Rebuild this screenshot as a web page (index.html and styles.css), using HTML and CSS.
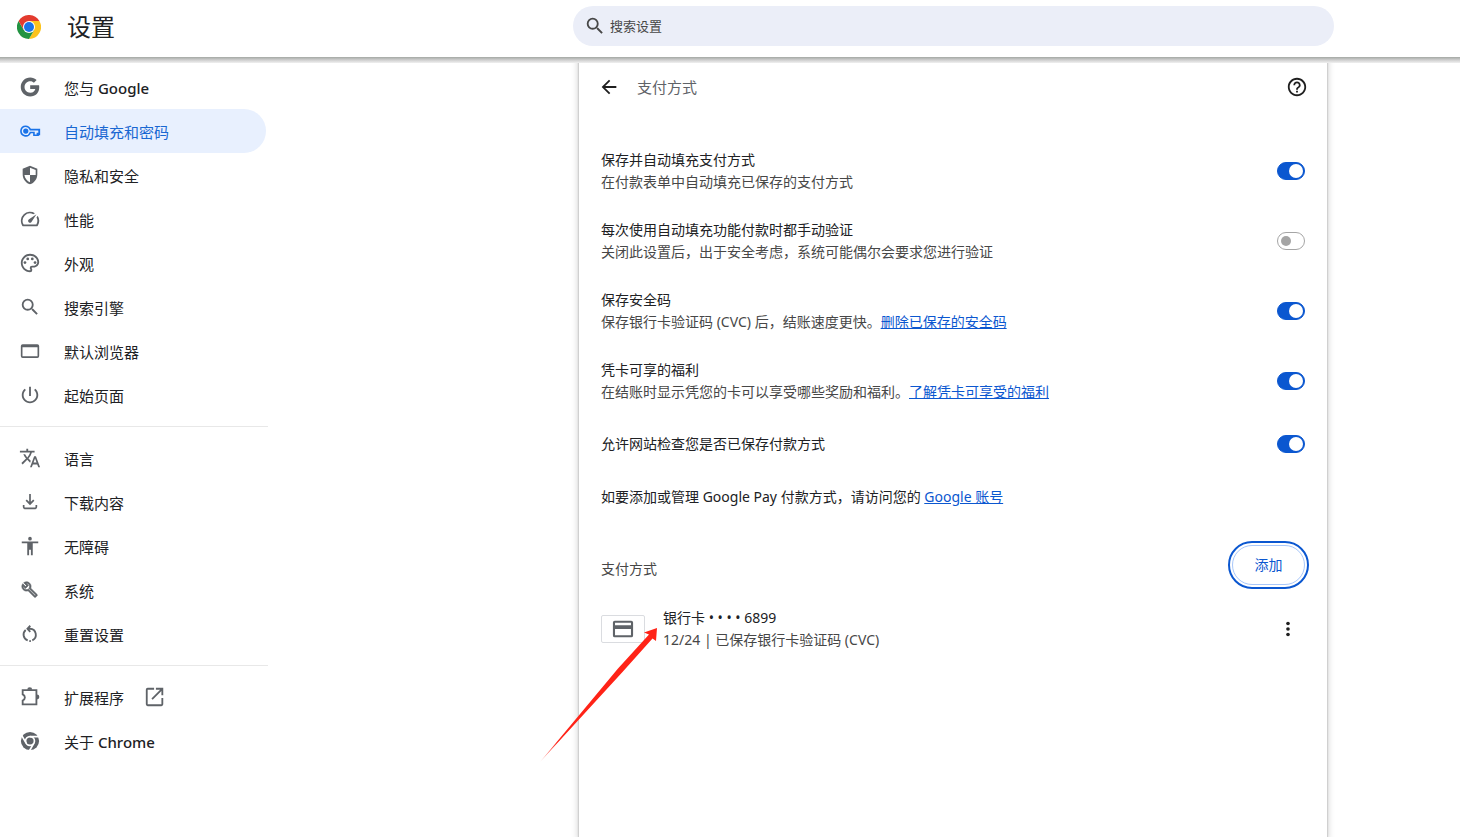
FILE: index.html
```html
<!DOCTYPE html>
<html lang="zh-CN">
<head>
<meta charset="utf-8">
<meta name="viewport" content="width=device-width, initial-scale=1">
<title>设置 - 支付方式</title>
<link rel="stylesheet" href="styles.css">
</head>
<body>
<header class="toolbar">
  <div class="brand">
    <svg class="brand-logo" viewBox="0 0 48 48" aria-hidden="true">
      <path fill="#e33b2e" d="M24 24 3.2 12A24 24 0 0 1 44.8 12Z"/>
      <path fill="#fcc31e" d="M24 12H44.8A24 24 0 0 1 24 48L34.4 30Z"/>
      <path fill="#229342" d="M13.6 30 3.2 12A24 24 0 0 0 24 48L34.4 30Z"/>
      <path fill="#e33b2e" d="M3.2 12 13.6 30 24 12Z"/>
      <circle cx="24" cy="24" r="12" fill="#fff"/>
      <circle cx="24" cy="24" r="10" fill="#1a73e8"/>
    </svg>
    <h1 class="brand-title">设置</h1>
  </div>
  <label class="search">
    <svg class="icon" viewBox="0 0 24 24" aria-hidden="true"><path d="M15.5 14h-.79l-.28-.27A6.47 6.47 0 0 0 16 9.5 6.5 6.5 0 1 0 9.5 16c1.61 0 3.09-.59 4.23-1.57l.27.28v.79l5 4.99L20.49 19l-4.99-5zm-6 0a4.5 4.5 0 1 1 0-9 4.5 4.5 0 0 1 0 9z"/></svg>
    <input class="search-input" type="search" placeholder="搜索设置" aria-label="搜索设置">
  </label>
</header>

<div class="page">
  <nav class="menu" aria-label="设置">
    <a class="menu-item" href="#people">
      <svg class="icon" viewBox="-2 -2 28 28" aria-hidden="true"><path d="M12.24 9.8V14.4h6.5c-.4 2.3-2.4 4.9-6.5 4.9-4.05 0-7.2-3.3-7.2-7.3s3.15-7.3 7.2-7.3c2.2 0 3.8.9 4.7 1.8l3.5-3.4C18.2 1.1 15.5 0 12.24 0c-6.635 0-12 5.365-12 12s5.365 12 12 12c6.926 0 11.52-4.869 11.52-11.726 0-.9-.085-1.7-.22-2.474H12.24z"/></svg>
      <span class="menu-label">您与 <span class="latin">Google</span></span>
    </a>
    <a class="menu-item menu-item-selected" href="#autofill" aria-current="page">
      <svg class="icon" viewBox="-1 -1 26 26" aria-hidden="true"><path fill-rule="evenodd" d="M7 5.500c2.700 0 5 1.600 6 3.900H24V17h-1.500v1h-6.800v-3.300H13A6.600 6.600 0 1 1 7 5.500zM7 7.400a4.700 4.700 0 1 0 4.400 6.300l.3-.9h5.900v3.200h2.200v-2h2v-2.700H11.700l-.3-.8A4.700 4.700 0 0 0 7 7.400zM7 9a3.100 3.100 0 1 1 0 6.200A3.100 3.100 0 0 1 7 9z"/></svg>
      <span class="menu-label">自动填充和密码</span>
    </a>
    <a class="menu-item" href="#privacy">
      <svg class="icon" viewBox="0 0 24 24" aria-hidden="true"><path fill-rule="evenodd" d="M12 2 4 5.200v5.900c0 5.100 3.400 9.700 8 10.900 4.600-1.200 8-5.800 8-10.900V5.200zM12 4.200 18.200 6.600V12H12zM12 12v7.900c-3-1.100-5.500-4.200-6.100-7.900z"/></svg>
      <span class="menu-label">隐私和安全</span>
    </a>
    <a class="menu-item" href="#performance">
      <svg class="icon" viewBox="0 0 24 24" aria-hidden="true"><path d="M20.380 8.570l-1.230 1.850a8 8 0 0 1-.22 7.580H5.070A8 8 0 0 1 15.580 6.850l1.850-1.230A10 10 0 0 0 3.350 19a2 2 0 0 0 1.720 1h13.850a2 2 0 0 0 1.740-1 10 10 0 0 0-.27-10.440zm-9.790 6.840a2 2 0 0 0 2.830 0l5.660-8.490-8.490 5.660a2 2 0 0 0 0 2.830z"/></svg>
      <span class="menu-label">性能</span>
    </a>
    <a class="menu-item" href="#appearance">
      <svg class="icon" viewBox="0 0 24 24" aria-hidden="true"><path d="M12 22C6.490 22 2 17.510 2 12S6.490 2 12 2s10 4.040 10 9c0 3.310-2.690 6-6 6h-1.770c-.28 0-.5.22-.5.5 0 .12.05.23.13.33.41.47.64 1.060.64 1.670A2.500 2.500 0 0 1 12 22zm0-18c-4.410 0-8 3.590-8 8s3.590 8 8 8c.28 0 .5-.22.5-.5a.54.54 0 0 0-.14-.35c-.41-.46-.63-1.050-.63-1.650a2.500 2.500 0 0 1 2.500-2.500H16c2.210 0 4-1.790 4-4 0-3.860-3.590-7-8-7z"/><circle cx="6.500" cy="11.500" r="1.500"/><circle cx="9.500" cy="7.500" r="1.500"/><circle cx="14.500" cy="7.500" r="1.500"/><circle cx="17.500" cy="11.500" r="1.500"/></svg>
      <span class="menu-label">外观</span>
    </a>
    <a class="menu-item" href="#search">
      <svg class="icon" viewBox="0 0 24 24" aria-hidden="true"><path d="M15.500 14h-.79l-.28-.27A6.470 6.470 0 0 0 16 9.500 6.500 6.500 0 1 0 9.500 16c1.610 0 3.090-.59 4.230-1.570l.27.28v.79l5 4.990L20.490 19l-4.990-5zm-6 0a4.500 4.500 0 1 1 0-9 4.500 4.500 0 0 1 0 9z"/></svg>
      <span class="menu-label">搜索引擎</span>
    </a>
    <a class="menu-item" href="#browser">
      <svg class="icon" viewBox="0 0 24 24" aria-hidden="true"><path fill-rule="evenodd" d="M4 4.500h16a2 2 0 0 1 2 2v11a2 2 0 0 1-2 2H4a2 2 0 0 1-2-2v-11a2 2 0 0 1 2-2zM3.800 8v9.700h16.400V8z"/></svg>
      <span class="menu-label">默认浏览器</span>
    </a>
    <a class="menu-item" href="#startup">
      <svg class="icon" viewBox="0 0 24 24" aria-hidden="true"><path d="M13 3h-2v10h2V3zm4.830 2.170l-1.420 1.420C17.990 7.860 19 9.810 19 12c0 3.870-3.130 7-7 7s-7-3.130-7-7c0-2.190 1.010-4.140 2.580-5.420L6.170 5.170C4.230 6.820 3 9.260 3 12c0 4.970 4.030 9 9 9s9-4.030 9-9c0-2.740-1.230-5.180-3.170-6.830z"/></svg>
      <span class="menu-label">起始页面</span>
    </a>
    <hr class="menu-separator">
    <a class="menu-item" href="#languages">
      <svg class="icon" viewBox="0 0 24 24" aria-hidden="true"><path d="M12.870 15.070l-2.540-2.510.03-.03c1.740-1.940 2.980-4.170 3.710-6.530H17V4h-7V2H8v2H1v1.990h11.170C11.500 7.920 10.440 9.750 9 11.350 8.070 10.320 7.300 9.190 6.690 8h-2c.73 1.630 1.730 3.170 2.980 4.560l-5.090 5.020L4 19l5-5 3.110 3.110.76-2.040zM18.500 10h-2L12 22h2l1.120-3h4.750L21 22h2l-4.500-12zm-2.620 7l1.620-4.330L19.120 17h-3.240z"/></svg>
      <span class="menu-label">语言</span>
    </a>
    <a class="menu-item" href="#downloads">
      <svg class="icon icon-stroke" viewBox="-1 -1 26 26" aria-hidden="true"><path d="M12 2.500v11.500M7.500 9.800 12 14.300l4.500-4.500M4.500 15.500v2.500a1.500 1.500 0 0 0 1.500 1.500h12a1.500 1.500 0 0 0 1.500-1.500v-2.500"/></svg>
      <span class="menu-label">下载内容</span>
    </a>
    <a class="menu-item" href="#accessibility">
      <svg class="icon" viewBox="0 0 24 24" aria-hidden="true"><path d="M12 2a2 2 0 1 1 0 4 2 2 0 0 1 0-4zm9 7h-6v13h-2v-6h-2v6H9V9H3V7h18v2z"/></svg>
      <span class="menu-label">无障碍</span>
    </a>
    <a class="menu-item" href="#system">
      <svg class="icon" viewBox="-3 -3 31 31" aria-hidden="true"><path stroke="currentColor" stroke-width=".9" d="M22.610 18.990l-9.080-9.080c.93-2.340.45-5.100-1.440-7C9.790.61 6.210.4 3.660 2.260L7.500 6.110 6.080 7.520 2.250 3.690C.39 6.230.6 9.820 2.900 12.110c1.860 1.860 4.570 2.350 6.890 1.480l9.110 9.110c.39.39 1.020.39 1.410 0l2.300-2.300c.4-.38.4-1.010 0-1.410zm-3 1.600l-9.460-9.460c-.61.45-1.290.72-2 .82-1.360.2-2.790-.21-3.830-1.250C3.370 9.760 2.930 8.500 3 7.260l3.090 3.090 4.240-4.240-3.090-3.090c1.240-.07 2.490.37 3.440 1.310 1.080 1.080 1.490 2.570 1.240 3.960-.12.71-.42 1.370-.88 1.960l9.450 9.450-.88.890z"/></svg>
      <span class="menu-label">系统</span>
    </a>
    <a class="menu-item" href="#reset">
      <svg class="icon icon-stroke" viewBox="0 0 24 24" aria-hidden="true"><path d="M7.300 7.600a6.600 6.600 0 0 0 2.200 11.300M11.300 19.600a6.600 6.600 0 0 0 1.600 0M14.500 18.900A6.600 6.600 0 0 0 12 6.300H9.600M12.300 3 9.200 6.300l3.100 3.300"/></svg>
      <span class="menu-label">重置设置</span>
    </a>
    <hr class="menu-separator">
    <a class="menu-item" href="#extensions">
      <svg class="icon icon-stroke" viewBox="0 0 24 24" aria-hidden="true"><path d="M4 4.500h15v15.500H4v-4.200c3.200-1.400 3.200-5.200 0-6.600z"/><path class="icon-solid" d="M9 4a2.700 2.700 0 0 1 5.400 0zM19.500 9.300a2.700 2.700 0 0 1 0 5.400z"/></svg>
      <span class="menu-label">扩展程序</span>
      <svg class="icon" viewBox="1 0 24 24" aria-hidden="true"><path d="M20 20H5V4h7V2H5a2 2 0 0 0-2 2v16a2 2 0 0 0 2 2h15a2 2 0 0 0 2-2v-7h-2zM14 2v2h4.590l-9.500 9.500 1.410 1.410L20 5.410V10h2V2z"/></svg>
    </a>
    <a class="menu-item" href="#about">
      <svg class="icon" viewBox="-26 -26 52 52" aria-hidden="true"><circle r="21.500"/><g fill="none" stroke="#fff" stroke-width="4"><circle r="10.500"/><path d="M0-10.500H22M9.100 5.200-1.900 24.300M-9.100 5.200-20.100-13.800"/></g></svg>
      <span class="menu-label">关于 <span class="latin">Chrome</span></span>
    </a>
  </nav>

  <main class="panel">
    <div class="panel-head">
      <button class="icon-button" type="button" aria-label="返回"><svg class="icon" viewBox="0 0 24 24" aria-hidden="true"><path d="M20 11H7.830l5.590-5.590L12 4l-8 8 8 8 1.410-1.410L7.830 13H20v-2z"/></svg></button>
      <h2 class="panel-title">支付方式</h2>
      <button class="icon-button" type="button" aria-label="帮助"><svg class="icon" viewBox="0 0 24 24" aria-hidden="true"><path d="M11 18h2v-2h-2v2zm1-16C6.480 2 2 6.480 2 12s4.480 10 10 10 10-4.480 10-10S17.520 2 12 2zm0 18c-4.410 0-8-3.590-8-8s3.590-8 8-8 8 3.590 8 8-3.590 8-8 8zm0-14c-2.210 0-4 1.790-4 4h2c0-1.100.9-2 2-2s2 .9 2 2c0 2-3 1.750-3 5h2c0-2.250 3-2.500 3-5 0-2.210-1.790-4-4-4z"/></svg></button>
    </div>

    <div class="setting">
      <div class="setting-text">
        <label for="save-payment">保存并自动填充支付方式</label>
        <p class="secondary">在付款表单中自动填充已保存的支付方式</p>
      </div>
      <input class="toggle" id="save-payment" type="checkbox" role="switch" checked>
    </div>
    <div class="setting">
      <div class="setting-text">
        <label for="verify-payment">每次使用自动填充功能付款时都手动验证</label>
        <p class="secondary">关闭此设置后，出于安全考虑，系统可能偶尔会要求您进行验证</p>
      </div>
      <input class="toggle" id="verify-payment" type="checkbox" role="switch">
    </div>
    <div class="setting">
      <div class="setting-text">
        <label for="save-cvc">保存安全码</label>
        <p class="secondary">保存银行卡验证码 (CVC) 后，结账速度更快。<a class="link" href="#delete-cvc">删除已保存的安全码</a></p>
      </div>
      <input class="toggle" id="save-cvc" type="checkbox" role="switch" checked>
    </div>
    <div class="setting">
      <div class="setting-text">
        <label for="card-benefits">凭卡可享的福利</label>
        <p class="secondary">在结账时显示凭您的卡可以享受哪些奖励和福利。<a class="link" href="#benefits">了解凭卡可享受的福利</a></p>
      </div>
      <input class="toggle" id="card-benefits" type="checkbox" role="switch" checked>
    </div>
    <div class="setting setting-single">
      <label class="setting-text" for="can-make-payment">允许网站检查您是否已保存付款方式</label>
      <input class="toggle" id="can-make-payment" type="checkbox" role="switch" checked>
    </div>

    <p class="note">如要添加或管理 Google Pay 付款方式，请访问您的 <a class="link" href="#account">Google 账号</a></p>

    <div class="section-head">
      <h3 class="section-title">支付方式</h3>
      <button class="add-button" type="button">添加</button>
    </div>

    <div class="card-row">
      <span class="card-art"><svg class="icon" viewBox="0 0 24 24" aria-hidden="true"><path fill-rule="evenodd" d="M3 3h18a2 2 0 0 1 2 2v14a2 2 0 0 1-2 2H3a2 2 0 0 1-2-2V5a2 2 0 0 1 2-2zM3.300 5.300v2.500h17.400V5.300zM3.300 12v6.700h17.400V12z"/></svg></span>
      <div class="card-text">
        <p>银行卡 • • • • 6899</p>
        <p class="secondary">12/24 | 已保存银行卡验证码 (CVC)</p>
      </div>
      <button class="icon-button card-menu" type="button" aria-label="更多操作"><svg class="icon" viewBox="0 0 24 24" aria-hidden="true"><circle cx="12" cy="6" r="2"/><circle cx="12" cy="12" r="2"/><circle cx="12" cy="18" r="2"/></svg></button>
      <svg class="pointer" viewBox="0 0 120 136" aria-hidden="true">
        <defs><linearGradient id="fade" x1="0" y1="1" x2="1" y2="0"><stop offset="0" stop-color="#ff2317" stop-opacity=".3"/><stop offset=".15" stop-color="#ff2317"/></linearGradient></defs>
        <path fill="url(#fade)" d="M118 1 105 5.500 110 7.500 79 41.500 1 135 83.500 45 113.500 11.500 117 14Z"/>
      </svg>
    </div>
  </main>
</div>
</body>
</html>
```
FILE: styles.css
```css
* {
  box-sizing: border-box;
}

body {
  margin: 0;
  min-height: 100vh;
  display: flex;
  flex-direction: column;
  overflow-x: hidden;
  background: #fff;
  color: #202124;
  font: 14px/22px "Noto Sans", "Noto Sans CJK SC", sans-serif;
}

h1, h2, h3, p {
  margin: 0;
  font-weight: 400;
}

.icon {
  display: block;
  flex: none;
  width: 22px;
  height: 22px;
  fill: currentColor;
}

.icon-stroke {
  fill: none;
  stroke: currentColor;
  stroke-width: 2;
}

.icon-solid {
  fill: currentColor;
  stroke: none;
}

/* Toolbar */

.toolbar {
  position: relative;
  z-index: 1;
  display: grid;
  grid-template-columns: 268px 305fr 761fr 126fr;
  height: 57px;
  background: #fff;
}

.toolbar::after {
  content: "";
  position: absolute;
  top: 100%;
  left: 0;
  right: 0;
  height: 6px;
  background: linear-gradient(#a4a8a4, #cfcfcf 50%, #f0f0f0);
}

.brand {
  display: flex;
  align-items: center;
  gap: 26px;
  padding-left: 17px;
  height: 54px;
}

.brand-logo {
  width: 24px;
  height: 24px;
}

.brand-title {
  font-size: 24px;
  line-height: 32px;
}

.search {
  grid-column: 3;
  display: flex;
  align-items: center;
  gap: 4px;
  height: 40px;
  margin-top: 6px;
  padding: 0 20px 0 11px;
  border-radius: 20px;
  background: #ebeef8;
  color: #474747;
}

.search-input {
  flex: 1;
  min-width: 0;
  padding: 0;
  border: 0;
  outline: 0;
  background: none;
  color: inherit;
  font: inherit;
  font-size: 13px;
}

.search-input::placeholder {
  color: #474747;
}

/* Page columns */

.page {
  flex: 1;
  display: grid;
  grid-template-columns: 268px 311fr 748fr 133fr;
}

/* Side menu */

.menu {
  padding: 8px 0;
}

.menu-item {
  display: flex;
  align-items: center;
  gap: 20px;
  height: 44px;
  margin-right: 2px;
  padding: 0 19px;
  border-radius: 0 22px 22px 0;
  color: #202124;
  font-size: 15px;
  text-decoration: none;
}

.menu-label {
  padding: 2px 0 0 3px;
}

.latin {
  font-weight: 500;
}

.menu-item .icon {
  color: #5f6368;
}

.menu-item-selected {
  background: #e8f0fe;
  color: #1967d2;
}

.menu-item-selected .icon {
  color: #1a73e8;
}

.menu-separator {
  height: 1px;
  margin: 9px 0;
  border: 0;
  background: #e8e8e8;
}

/* Payment panel */

.panel {
  grid-column: 3;
  padding: 8px 22px;
  background: #fff;
  box-shadow: 0 0 1px 1px #d0d0d0, 0 1px 6px 2px #dcdcdc;
}

.panel-head {
  display: flex;
  align-items: center;
  height: 44px;
  margin-bottom: 27px;
}

.panel-title {
  flex: 1;
  margin-left: 20px;
  color: #5f6368;
  font-size: 15px;
}

.icon-button {
  display: grid;
  place-items: center;
  width: 22px;
  height: 22px;
  margin: 0 -3px;
  padding: 0;
  border: 0;
  background: none;
  color: #1f1f1f;
}

.setting {
  display: flex;
  align-items: center;
  gap: 22px;
  min-height: 70px;
}

.setting-single {
  min-height: 56px;
}

.setting-text {
  flex: 1;
  min-width: 0;
}

.setting-text label {
  display: block;
}

.secondary {
  color: #474747;
}

.link {
  color: #0b57d0;
}

.toggle {
  flex: none;
  display: grid;
  align-items: center;
  appearance: none;
  width: 28px;
  height: 18px;
  margin: 0;
  padding: 0 3px;
  border: 1px solid #a5a5a5;
  border-radius: 9px;
  background: #fff;
}

.toggle::before {
  content: "";
  width: 10px;
  height: 10px;
  border-radius: 50%;
  background: #a5a5a5;
}

.toggle:checked {
  justify-content: end;
  padding: 0 1px;
  border-color: #0b57d0;
  background: #0b57d0;
}

.toggle:checked::before {
  width: 14px;
  height: 14px;
  background: #fff;
}

.note {
  margin-top: 14px;
}

.section-head {
  display: flex;
  align-items: center;
  justify-content: space-between;
  margin-top: 37px;
}

.section-title {
  padding-top: 8px;
  color: #474747;
  font-size: 14px;
}

.add-button {
  width: 73px;
  height: 40px;
  padding: 0;
  border: 1px solid #a8c7fa;
  border-radius: 20px;
  outline: 2px solid #0b57d0;
  outline-offset: 2px;
  background: #fff;
  color: #0b57d0;
  font: inherit;
}

.card-row {
  position: relative;
  display: flex;
  align-items: center;
  margin-top: 22px;
}

.card-art {
  display: grid;
  place-items: center;
  width: 44px;
  height: 28px;
  margin-right: 18px;
  border: 1px solid #dadce0;
  border-radius: 2px;
  color: #5f6368;
}

.card-text {
  flex: 1;
}

.card-menu {
  margin: 0 6px;
}

/* Annotation arrow lying over the card row */

.pointer {
  position: absolute;
  top: 20px;
  left: -62px;
  width: 120px;
  height: 136px;
  pointer-events: none;
}
```
